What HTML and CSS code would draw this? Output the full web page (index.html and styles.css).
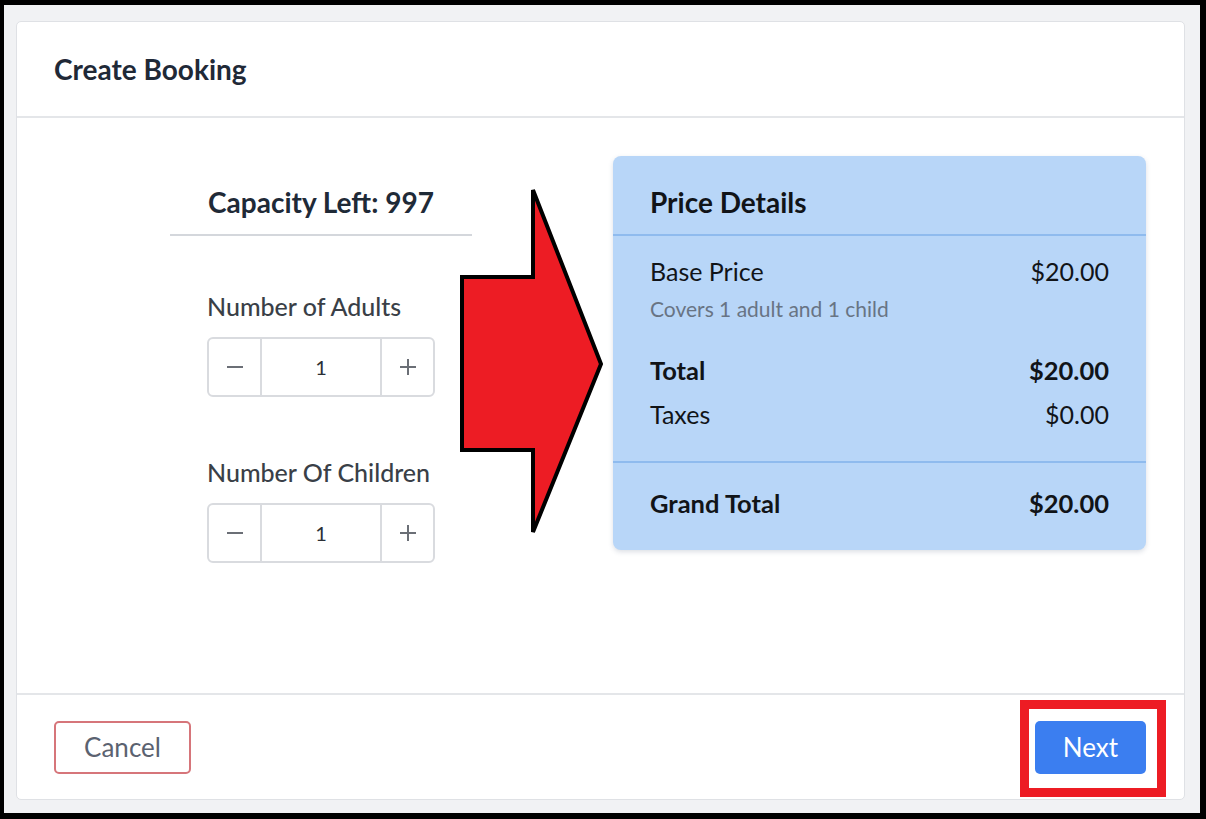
FILE: index.html
```html
<!DOCTYPE html>
<html lang="en">
<head>
<meta charset="utf-8">
<title>Create Booking</title>
<link rel="stylesheet" href="styles.css">
</head>
<body>
<div class="screen">
  <div class="modal">
    <div class="modal-header">
      <h1 class="modal-title">Create Booking</h1>
    </div>
    <div class="modal-body">
      <div class="guests">
        <div class="guests-head">Capacity Left: 997</div>
        <div class="guests-fields">
          <div class="field">
            <div class="field-label">Number of Adults</div>
            <div class="stepper">
              <button class="step-btn" type="button"><svg width="20" height="20" viewBox="0 0 20 20"><path d="M2 10h16" stroke="#6b6f76" stroke-width="2"/></svg></button>
              <div class="step-value">1</div>
              <button class="step-btn" type="button"><svg width="20" height="20" viewBox="0 0 20 20"><path d="M2 10h16M10 2v16" stroke="#6b6f76" stroke-width="2"/></svg></button>
            </div>
          </div>
          <div class="field">
            <div class="field-label">Number Of Children</div>
            <div class="stepper">
              <button class="step-btn" type="button"><svg width="20" height="20" viewBox="0 0 20 20"><path d="M2 10h16" stroke="#6b6f76" stroke-width="2"/></svg></button>
              <div class="step-value">1</div>
              <button class="step-btn" type="button"><svg width="20" height="20" viewBox="0 0 20 20"><path d="M2 10h16M10 2v16" stroke="#6b6f76" stroke-width="2"/></svg></button>
            </div>
          </div>
        </div>
      </div>

      <div class="price-card">
        <div class="price-head">Price Details</div>
        <div class="price-lines">
          <div class="price-row"><span>Base Price</span><span>$20.00</span></div>
          <div class="price-note">Covers 1 adult and 1 child</div>
          <div class="price-row strong total-row"><span>Total</span><span>$20.00</span></div>
          <div class="price-row taxes-row"><span>Taxes</span><span>$0.00</span></div>
        </div>
        <div class="price-foot">
          <div class="price-row strong"><span>Grand Total</span><span>$20.00</span></div>
        </div>
      </div>

      <svg class="callout-arrow" width="160" height="360" viewBox="0 0 160 360">
        <polygon points="15,96 86,96 86,9 154,183 86,351 86,269 15,269" fill="#ed1c24" stroke="#000" stroke-width="4" stroke-linejoin="miter"/>
      </svg>
    </div>
    <div class="modal-footer">
      <button class="btn btn-cancel" type="button">Cancel</button>
      <div class="next-wrap">
        <button class="btn btn-next" type="button">Next</button>
        <div class="highlight-box"></div>
      </div>
    </div>
  </div>
</div>
</body>
</html>
```

FILE: styles.css
```css
* { box-sizing: border-box; }

html, body {
  margin: 0;
  padding: 0;
  background: #000;
}

body {
  padding: 5px 6px 6px 4px;
  font-family: Lato, "Open Sans", "Liberation Sans", sans-serif;
}

.screen {
  width: 1196px;
  height: 808px;
  background: #f1f2f4;
  padding: 16px 15px 13px 12px;
}

.modal {
  height: 779px;
  background: #fff;
  border: 1px solid #dfe1e5;
  border-radius: 5px;
  display: flex;
  flex-direction: column;
}

.modal-header {
  height: 96px;
  border-bottom: 2px solid #e4e6e9;
  display: flex;
  align-items: center;
  padding-left: 37px;
}

.modal-title {
  margin: 0;
  font-size: 28px;
  font-weight: 700;
  color: #1f2937;
}

.modal-body {
  flex: 1;
  position: relative;
  display: flex;
  align-items: flex-start;
  padding: 38px 38px 0 153px;
}

.guests {
  width: 302px;
}

.guests-head {
  height: 80px;
  border-bottom: 2px solid #d4d7dc;
  padding-top: 29px;
  text-align: center;
  font-size: 28px;
  line-height: 34px;
  font-weight: 700;
  color: #1f2a37;
}

.guests-fields {
  padding: 55px 37px 0;
  display: flex;
  flex-direction: column;
  gap: 60px;
}

.field-label {
  font-size: 25px;
  line-height: 30px;
  font-weight: 500;
  color: #3a3f47;
  margin-bottom: 16px;
  white-space: nowrap;
}

.stepper {
  display: flex;
  height: 60px;
  border: 2px solid #d9dbdf;
  border-radius: 6px;
  background: #fff;
}

.step-btn {
  width: 51px;
  border: 0;
  background: transparent;
  padding: 0;
  display: flex;
  align-items: center;
  justify-content: center;
}

.step-value {
  flex: 1;
  border-left: 2px solid #d9dbdf;
  border-right: 2px solid #d9dbdf;
  display: flex;
  align-items: center;
  justify-content: center;
  font-size: 20px;
  color: #2b2f36;
}

.price-card {
  margin-left: auto;
  width: 533px;
  height: 394px;
  background: #b8d6f8;
  border-radius: 8px;
  box-shadow: 0 2px 5px rgba(60, 80, 110, 0.18);
  color: #111418;
  display: flex;
  flex-direction: column;
}

.price-head {
  height: 80px;
  border-bottom: 2px solid #8fbbee;
  padding: 29px 37px 0;
  font-size: 28px;
  line-height: 34px;
  font-weight: 700;
}

.price-lines {
  height: 227px;
  border-bottom: 2px solid #8fbbee;
  padding: 20px 37px 0 37px;
}

.price-row {
  display: flex;
  justify-content: space-between;
  font-size: 25px;
  line-height: 30px;
}

.price-row.strong {
  font-weight: 700;
  font-size: 25.5px;
}

.price-note {
  font-size: 21px;
  line-height: 26px;
  color: #687484;
  margin-top: 10px;
}

.total-row {
  margin-top: 33px;
}

.taxes-row {
  margin-top: 14px;
}

.price-foot {
  padding: 25px 37px 0;
}

.callout-arrow {
  position: absolute;
  left: 430px;
  top: 63px;
}

.modal-footer {
  height: 106px;
  border-top: 2px solid #e4e6e9;
  display: flex;
  align-items: center;
  justify-content: space-between;
  padding: 0 38px 0 37px;
}

.btn {
  height: 53px;
  border-radius: 5px;
  font-family: inherit;
  font-size: 26px;
  padding: 0;
  cursor: pointer;
}

.btn-cancel {
  width: 137px;
  background: #fff;
  border: 2px solid #d6757a;
  color: #5b6270;
}

.next-wrap {
  position: relative;
}

.btn-next {
  display: block;
  width: 111px;
  background: #3b7ef0;
  border: 0;
  color: #fff;
}

.highlight-box {
  position: absolute;
  left: -15px;
  top: -21px;
  width: 146px;
  height: 97px;
  border: 9px solid #ed1c24;
}
```
